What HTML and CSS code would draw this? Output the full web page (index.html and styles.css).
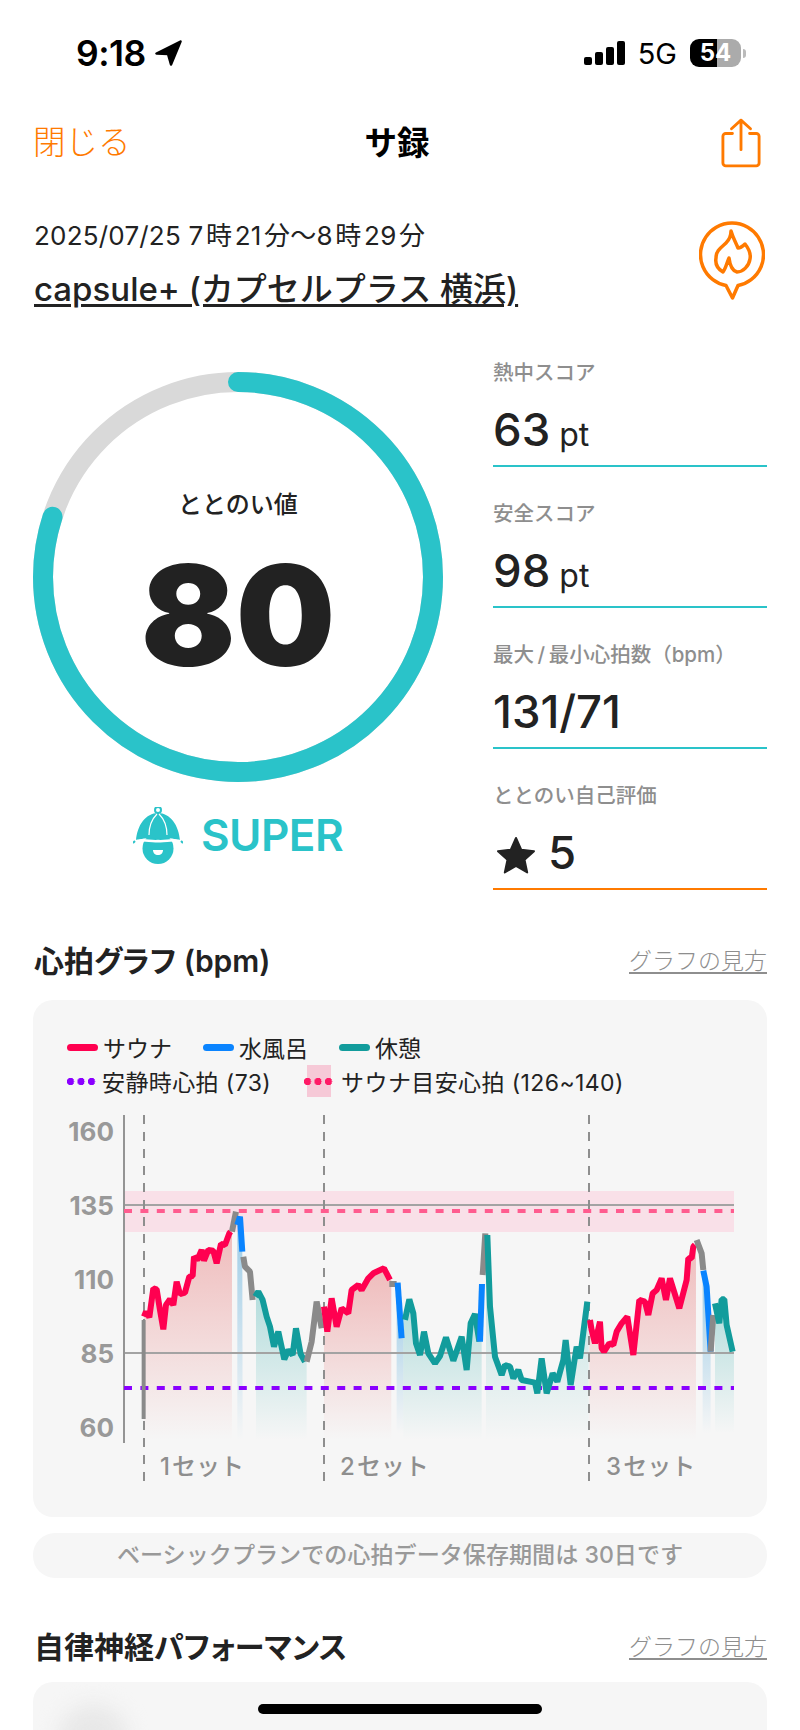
FILE: index.html
```html
<!DOCTYPE html>
<html lang="ja">
<head>
  <meta charset="UTF-8">
  <meta name="viewport" content="width=device-width, initial-scale=1.0">
  <title>サ録</title>
  <link rel="stylesheet" href="styles.css">
</head>
<body>

  <div class="page">

    <div class="status-bar">
      <div class="status-left">
        <span class="clock">9:18</span>
        <svg class="location" viewBox="0 0 27 26"><path d="M25.500 1.500 1.500 13.500l11.500 .5 3 10.500z" fill="#000" stroke="#000" stroke-width="2.500" stroke-linejoin="round"/></svg>
      </div>
      <div class="status-right">
        <div class="signal"><i></i><i></i><i></i><i></i></div>
        <span class="network">5G</span>
        <div class="battery"><span>54</span></div>
        <div class="battery-tip"></div>
      </div>
    </div>

    <div class="nav">
      <span class="nav-close">閉じる</span>
      <span class="nav-title">サ録</span>
      <div class="nav-side">
        <svg class="nav-share" viewBox="0 0 42 52" fill="none" stroke="#ff7a00" stroke-width="3" stroke-linecap="round" stroke-linejoin="round">
          <path d="M12 16H5a3 3 0 0 0-3 3v28a3 3 0 0 0 3 3h32a3 3 0 0 0 3-3V19a3 3 0 0 0-3-3h-7"/>
          <path d="M21 33V2M11 11l10-9 10 9"/>
        </svg>
      </div>
    </div>

    <div class="visit">
      <div>
        <div class="visit-date">2025/07/25 7&hairsp;時&hairsp;21&hairsp;分～8&hairsp;時&hairsp;29&hairsp;分</div>
        <div class="visit-place">capsule+ (カプセルプラス 横浜)</div>
      </div>
      <svg class="visit-pin" viewBox="699 221 66 80" fill="none" stroke="#ff7a00" stroke-width="3.5" stroke-linejoin="round">
        <path d="M726 285.500A31.500 31.500 0 1 1 738 285.500L732.500 298z"/>
        <path d="M731 231C733 238 736 243 738 248C741 248 743 246 745 244C749 249 751 254 750 259C749 266 743 272 737 272C733 271 730 266 729 258C727 262 726 268 723 272C718 269 715 264 716 258C716 250 722 247 726 243C729 240 731 236 731 231Z"/>
      </svg>
    </div>

    <div class="summary">
      <div class="score">
        <div class="gauge">
          <svg viewBox="0 0 410 410" fill="none" stroke-width="20">
            <circle cx="205" cy="205" r="195" stroke="#d9d9d9"/>
            <circle cx="205" cy="205" r="195" stroke="#2ac3c9" stroke-linecap="round" pathLength="100" stroke-dasharray="80 100" transform="rotate(-90 205 205)"/>
          </svg>
          <div class="gauge-text">
            <div class="gauge-label">ととのい値</div>
            <div class="gauge-value">80</div>
          </div>
        </div>
        <div class="rank">
          <svg class="rank-icon" viewBox="133 807 50 57">
            <circle cx="158" cy="810" r="3" fill="none" stroke="#2ac3c9" stroke-width="2"/>
            <circle cx="158" cy="848.500" r="15.500" fill="#2ac3c9"/>
            <path d="M136 841C137 825 146 813 158 813C170 813 179 825 180 841C172 837 165 839 158 838C151 839 144 837 136 841Z" fill="#2ac3c9"/>
            <path d="M149 835C149 827 152 819 157 814M167 835C167 827 164 819 159 814" fill="none" stroke="#fff" stroke-width="1.200"/>
            <path d="M133 842C142 838 150 842 158 841C166 842 174 838 183 842" fill="none" stroke="#fff" stroke-width="2.500"/>
            <path d="M133 843l2-2M183 843l-2-2" stroke="#2ac3c9" stroke-width="2"/>
            <path d="M153 850H163C163 853 161 855 158 855C155 855 153 853 153 850Z" fill="#fff"/>
          </svg>
          <span class="rank-text">SUPER</span>
        </div>
      </div>

      <div class="metrics">
        <div class="metric">
          <div class="metric-label">熱中スコア</div>
          <div class="metric-value">63<small>pt</small></div>
        </div>
        <div class="metric">
          <div class="metric-label">安全スコア</div>
          <div class="metric-value">98<small>pt</small></div>
        </div>
        <div class="metric">
          <div class="metric-label">最大&thinsp;/&thinsp;最小心拍数（bpm）</div>
          <div class="metric-value">131/71</div>
        </div>
        <div class="metric metric-self">
          <div class="metric-label">ととのい自己評価</div>
          <div class="metric-value">
            <svg class="star" viewBox="0 0 40 38"><path d="M20 2l5.300 11.800 12.700 1.400-9.500 8.600 2.700 12.600L20 30l-11.200 6.400 2.700-12.600L2 15.200l12.700-1.400z" fill="#222" stroke="#222" stroke-width="2" stroke-linejoin="round"/></svg>5
          </div>
        </div>
      </div>
    </div>

    <div class="section-head heart-head">
      <h2>心拍グラフ (bpm)</h2>
      <span class="help-link">グラフの見方</span>
    </div>

    <div class="card">
      <div class="legend">
        <div class="legend-row">
          <span class="legend-item"><i class="swatch sauna"></i>サウナ</span>
          <span class="legend-item"><i class="swatch bath"></i>水風呂</span>
          <span class="legend-item"><i class="swatch rest"></i>休憩</span>
        </div>
        <div class="legend-row legend-lines">
          <span class="legend-item"><i class="dots resting"></i>安静時心拍 (73)</span>
          <span class="legend-item"><span class="target-box"><i class="dots target"></i></span>サウナ目安心拍 (126~140)</span>
        </div>
      </div>

      <svg class="chart" viewBox="33 1105 734 412" fill="none">
        <defs>
          <linearGradient id="fade-red" x1="0" y1="0" x2="0" y2="1">
            <stop offset="0" stop-color="#e66a6a" stop-opacity=".42"/>
            <stop offset="1" stop-color="#e66a6a" stop-opacity="0"/>
          </linearGradient>
          <linearGradient id="fade-blue" x1="0" y1="0" x2="0" y2="1">
            <stop offset="0" stop-color="#3f9fd6" stop-opacity=".5"/>
            <stop offset="1" stop-color="#3f9fd6" stop-opacity="0"/>
          </linearGradient>
          <linearGradient id="fade-teal" x1="0" y1="0" x2="0" y2="1">
            <stop offset="0" stop-color="#16a2a0" stop-opacity=".3"/>
            <stop offset="1" stop-color="#16a2a0" stop-opacity="0"/>
          </linearGradient>
        </defs>

        <rect x="124" y="1191" width="610" height="41" fill="#f9e0e8"/>

        <!-- areas under the line, first half of the chart -->
        <g transform="translate(20 1200) scale(.3333)">
          <path fill="url(#fade-red)" d="M372 720V350L378 335 388 352 400 265 410 268 420 330 430 388 438 315 450 298 460 315 470 245 480 282 495 278 508 230 518 228 522 170 532 180 545 150 552 182 565 150 580 152 590 190 603 132 615 135 628 100 636 90V720Z"/>
          <path fill="url(#fade-blue)" d="M652 720V75L660 50 667 155 668 720Z"/>
          <path fill="url(#fade-teal)" d="M708 720V285L715 275 728 300 740 350 750 380 762 440 775 395 793 478 805 450 818 465 828 385 842 462 855 485 860 485V720Z"/>
          <path fill="url(#fade-red)" d="M912 720V320L922 395 935 295 950 380 965 325 985 340 995 270 1015 255 1025 270 1045 235 1060 220 1092 205 1110 240 1114 240V720Z"/>
          <path fill="url(#fade-blue)" d="M1130 700V250L1135 250 1145 415 1150 415V700Z"/>
        </g>
        <g transform="translate(400 1200) scale(.3333)">
          <path fill="url(#fade-teal)" d="M10 720V360L15 360 28 298 40 340 48 430 60 465 72 395 85 460 105 490 120 468 138 412 160 482 185 410 200 510 212 370 225 342 238 425 245 425V720Z"/>
          <path fill="url(#fade-teal)" d="M258 720V105L262 105 270 320 285 470 305 525 315 495 330 500 340 535 355 510 365 540 405 548 412 580 425 475 440 580 458 520 472 545 490 480 497 420 512 555 530 440 540 475 562 305 566 305V720Z"/>
          <path fill="url(#fade-red)" d="M568 720V360L575 390 585 430 600 365 605 445 612 455 628 430 640 435 650 395 665 370 682 350 700 465 718 300 735 305 745 345 758 280 770 270 785 235 798 300 810 235 838 325 860 240 865 175 875 175 880 140 888 130V720Z"/>
          <path fill="url(#fade-blue)" d="M908 700V212L920 260 932 455V700Z"/>
          <path fill="url(#fade-teal)" d="M945 700V310L958 370 965 298 973 298 980 375 998 455 1002 455V700Z"/>
        </g>

        <g stroke="#a3a3a3" stroke-width="2">
          <path d="M124 1205H734M124 1353H734"/>
        </g>
        <path d="M124 1115V1443" stroke="#949494" stroke-width="2"/>
        <path d="M144 1115V1485M324 1115V1485M589 1115V1485" stroke="#8e8e8e" stroke-width="2" stroke-dasharray="9 8"/>
        <path d="M124 1211H734" stroke="#ff5c8f" stroke-width="4" stroke-dasharray="8 8.400"/>
        <path d="M124 1388H734" stroke="#8a00ff" stroke-width="4" stroke-dasharray="8 8.400"/>

        <!-- heart rate line, traced in two groups -->
        <g transform="translate(20 1200) scale(.3333)" stroke-width="18" stroke-linejoin="bevel">
          <path stroke="#8a8a8a" stroke-width="12" d="M371 657V360"/>
          <path stroke="#ff0050" d="M372 350L378 335 388 352 400 265 410 268 420 330 430 388 438 315 450 298 460 315 470 245 480 282 495 278 508 230 518 228 522 170 532 180 545 150 552 182 565 150 580 152 590 190 603 132 615 135 628 100 632 95"/>
          <path stroke="#8a8a8a" d="M636 95L648 35"/>
          <path stroke="#0a84ff" d="M652 75L660 50 667 155"/>
          <path stroke="#8a8a8a" d="M670 170L675 200 690 215 698 300"/>
          <path stroke="#129c9c" d="M706 290L715 275 728 300 740 350 750 380 762 440 775 395 793 478 805 450 818 465 828 385 842 462 855 485"/>
          <path stroke="#8a8a8a" d="M860 485L875 425 890 305 905 385"/>
          <path stroke="#ff0050" d="M912 320L922 395 935 295 950 380 965 325 985 340 995 270 1015 255 1025 270 1045 235 1060 220 1092 205 1110 240"/>
          <path stroke="#8a8a8a" d="M1108 252H1130"/>
          <path stroke="#0a84ff" d="M1133 248L1145 415"/>
        </g>
        <g transform="translate(400 1200) scale(.3333)" stroke-width="18" stroke-linejoin="bevel">
          <path stroke="#129c9c" d="M15 360L28 298 40 340 48 430 60 465 72 395 85 460 105 490 120 468 138 412 160 482 185 410 200 510 212 370 225 342 238 425"/>
          <path stroke="#0a84ff" d="M240 425L246 252"/>
          <path stroke="#8a8a8a" d="M248 225L256 100"/>
          <path stroke="#129c9c" d="M262 105L270 320 285 470 305 525 315 495 330 500 340 535 355 510 365 540 405 548 412 580 425 475 440 580 458 520 472 545 490 480 497 420 512 555 530 440 540 475 562 305"/>
          <path stroke="#ff0050" d="M570 360L575 390 585 430 600 365 605 445 612 455 628 430 640 435 650 395 665 370 682 350 700 465 718 300 735 305 745 345 758 280 770 270 785 235 798 300 810 235 838 325 860 240 865 175 875 175 880 140 885 135"/>
          <path stroke="#8a8a8a" d="M890 120L905 160 910 210"/>
          <path stroke="#0a84ff" d="M910 212L920 260 932 455"/>
          <path stroke="#8a8a8a" d="M932 455L940 345"/>
          <path stroke="#129c9c" d="M945 310L958 370 965 298 973 298 980 375 998 455"/>
        </g>

        <g class="axis-label" text-anchor="end">
          <text x="114" y="1141">160</text>
          <text x="114" y="1215">135</text>
          <text x="114" y="1289">110</text>
          <text x="114" y="1363">85</text>
          <text x="114" y="1437">60</text>
        </g>
        <g class="set-label">
          <text x="160" y="1475">1&hairsp;セット</text>
          <text x="340" y="1475">2&hairsp;セット</text>
          <text x="606" y="1475">3&hairsp;セット</text>
        </g>
      </svg>
    </div>

    <div class="plan-note">ベーシックプランでの心拍データ保存期間は 30日です</div>

    <div class="section-head nerve-head">
      <h2>自律神経パフォーマンス</h2>
      <span class="help-link">グラフの見方</span>
    </div>

    <div class="card card-next">
      <div class="card-blob"></div>
    </div>

    <div class="home-bar"></div>
  </div>

</body>
</html>
```

FILE: styles.css
```css
* {
  box-sizing: border-box;
  margin: 0;
  padding: 0;
}

body {
  font-family: Inter, "Noto Sans CJK JP", sans-serif;
  background-color: #fff;
  color: #222;
}

.page {
  position: relative;
  width: 800px;
  height: 1730px;
  overflow: hidden;
}

/* status bar */
.status-bar {
  height: 106px;
  display: flex;
  justify-content: space-between;
  align-items: center;
  padding: 0 54px 0 76px;
  color: #000;
}

.status-left {
  display: flex;
  align-items: center;
  gap: 9px;
}

.clock {
  font-size: 35.500px;
  font-weight: 600;
  letter-spacing: -0.5px;
}

.location {
  width: 27px;
  height: 26px;
}

.status-right {
  display: flex;
  align-items: center;
}

.signal {
  display: flex;
  align-items: flex-end;
  gap: 3.500px;
  height: 24px;
  margin-right: 13px;
}

.signal i {
  width: 7.500px;
  background-color: #000;
  border-radius: 2px;
}

.signal i:nth-child(1) { height: 8px; }
.signal i:nth-child(2) { height: 13px; }
.signal i:nth-child(3) { height: 18px; }
.signal i:nth-child(4) { height: 24px; }

.network {
  font-size: 29px;
  font-weight: 400;
  margin-right: 13px;
}

.battery {
  width: 51px;
  height: 28px;
  border-radius: 9px;
  background: linear-gradient(to right, #000 53%, #ababab 53%);
  color: #fff;
  font-size: 24px;
  font-weight: 700;
  line-height: 28px;
  text-align: center;
}

.battery-tip {
  width: 3px;
  height: 9px;
  margin-left: 2px;
  background-color: #bbb;
  border-radius: 0 3px 3px 0;
}

/* nav */
.nav {
  display: grid;
  grid-template-columns: 1fr auto 1fr;
  align-items: center;
  height: 72px;
  padding: 0 39px 0 33px;
}

.nav-close {
  font-size: 32.500px;
  font-weight: 300;
  color: #ff7a00;
  margin-top: -6px;
}

.nav-title {
  font-size: 32.500px;
  font-weight: 700;
  color: #000;
  margin-top: -4px;
}

.nav-side {
  display: flex;
  justify-content: flex-end;
}

.nav-share {
  width: 40px;
  height: 50px;
  margin-top: 2px;
}

/* visit info */
.visit {
  display: flex;
  justify-content: space-between;
  padding: 36px 35px 0 34px;
}

.visit-date {
  font-size: 26px;
  line-height: 44px;
  font-weight: 400;
  letter-spacing: 0.2px;
  white-space: nowrap;
}

.visit-place {
  font-size: 33px;
  line-height: 46px;
  margin-top: 8px;
  font-weight: 500;
  text-decoration: underline;
  text-underline-offset: 3px;
  white-space: nowrap;
}

.visit-pin {
  width: 66px;
  height: 80px;
  margin-top: 7px;
}

/* score + metrics */
.summary {
  display: flex;
  gap: 50px;
  padding: 46px 33px 0;
}

.score {
  width: 410px;
  padding-top: 14px;
}

.gauge {
  position: relative;
  width: 410px;
  height: 410px;
}

.gauge svg {
  display: block;
}

.gauge-text {
  position: absolute;
  inset: 0;
  display: flex;
  flex-direction: column;
  align-items: center;
}

.gauge-label {
  margin-top: 115px;
  font-size: 24px;
  line-height: 36px;
  font-weight: 500;
}

.gauge-value {
  margin-top: 12px;
  font-size: 140px;
  line-height: 160px;
  font-weight: 900;
}

.rank {
  display: flex;
  justify-content: center;
  align-items: center;
  gap: 18px;
  margin-top: 25px;
}

.rank-icon {
  width: 50px;
  height: 57px;
}

.rank-text {
  font-size: 44px;
  font-weight: 600;
  letter-spacing: -0.5px;
  color: #2ac3c9;
  line-height: 57px;
}

.metrics {
  width: 274px;
}

.metric {
  border-bottom: 2px solid #2ac3c9;
  margin-bottom: 32px;
  padding-bottom: 7px;
}

.metric-self {
  border-bottom-color: #ff7a00;
}

.metric-label {
  font-size: 20.500px;
  line-height: 30px;
  font-weight: 500;
  color: #8e8e8e;
  white-space: nowrap;
}

.metric-value {
  height: 56px;
  line-height: 56px;
  margin-top: 14px;
  font-size: 45.500px;
  font-weight: 500;
}

.metric-value small {
  font-size: 32px;
  font-weight: 400;
  margin-left: 9px;
}

.star {
  width: 40px;
  height: 38px;
  margin: 0 12px 0 3px;
  vertical-align: -5px;
}

/* section heads */
.section-head {
  display: flex;
  justify-content: space-between;
  align-items: center;
  height: 44px;
  padding: 0 33px 0 34px;
}

.section-head h2 {
  font-size: 30px;
  font-weight: 600;
  font-feature-settings: "palt";
}

.heart-head {
  margin-top: 15px;
}

.nerve-head {
  margin-top: 45px;
}

.help-link {
  font-size: 23px;
  font-weight: 300;
  color: #8e8e8e;
  text-decoration: underline;
  text-underline-offset: 3px;
}

/* chart card */
.card {
  margin: 19px 33px 0;
  padding-top: 30px;
  background-color: #f6f6f6;
  border-radius: 20px;
}

.legend {
  height: 75px;
  padding-left: 34px;
  font-size: 23px;
  white-space: nowrap;
}

.legend-row {
  display: flex;
  height: 34px;
  align-items: center;
}

.legend-item {
  display: flex;
  align-items: center;
  gap: 5px;
  margin-right: 31px;
}

.legend-lines {
  letter-spacing: 0.4px;
}

.legend-lines .legend-item {
  margin-right: 36px;
}

.swatch {
  width: 31px;
  height: 7px;
  border-radius: 4px;
}

.sauna { background-color: #ff0050; }
.bath { background-color: #0a84ff; }
.rest { background-color: #129c9c; }

.dots {
  display: block;
  width: 30px;
  height: 7px;
  background-size: 10.500px 7px;
  background-repeat: repeat-x;
}

.resting {
  background-image: radial-gradient(circle at 3.500px 3.500px, #8a00ff 3.500px, transparent 3.800px);
}

.target {
  flex: none;
  margin-left: -3px;
  background-image: radial-gradient(circle at 3.500px 3.500px, #ff1a66 3.500px, transparent 3.800px);
}

.target-box {
  display: flex;
  align-items: center;
  width: 24px;
  height: 32px;
  margin-right: 5px;
  background-color: #f6c9d7;
}

.chart {
  display: block;
  width: 734px;
  height: 412px;
}

.axis-label text {
  font-size: 26px;
  font-weight: 700;
  fill: #999;
}

.set-label text {
  font-size: 24px;
  font-weight: 500;
  fill: #8e8e8e;
}

.plan-note {
  margin: 16px 33px 0;
  height: 45px;
  background-color: #f6f6f6;
  border-radius: 22px;
  font-size: 23.100px;
  font-weight: 500;
  line-height: 45px;
  text-align: center;
  color: #999;
}

.card-next {
  position: relative;
  height: 200px;
  margin-top: 15px;
  overflow: hidden;
}

.card-blob {
  position: absolute;
  left: 25px;
  top: 22px;
  width: 70px;
  height: 70px;
  border-radius: 50%;
  background-color: #e8e8e8;
  filter: blur(10px);
}

.home-bar {
  position: absolute;
  left: 258px;
  top: 1704px;
  width: 284px;
  height: 10px;
  background-color: #000;
  border-radius: 5px;
}
```
